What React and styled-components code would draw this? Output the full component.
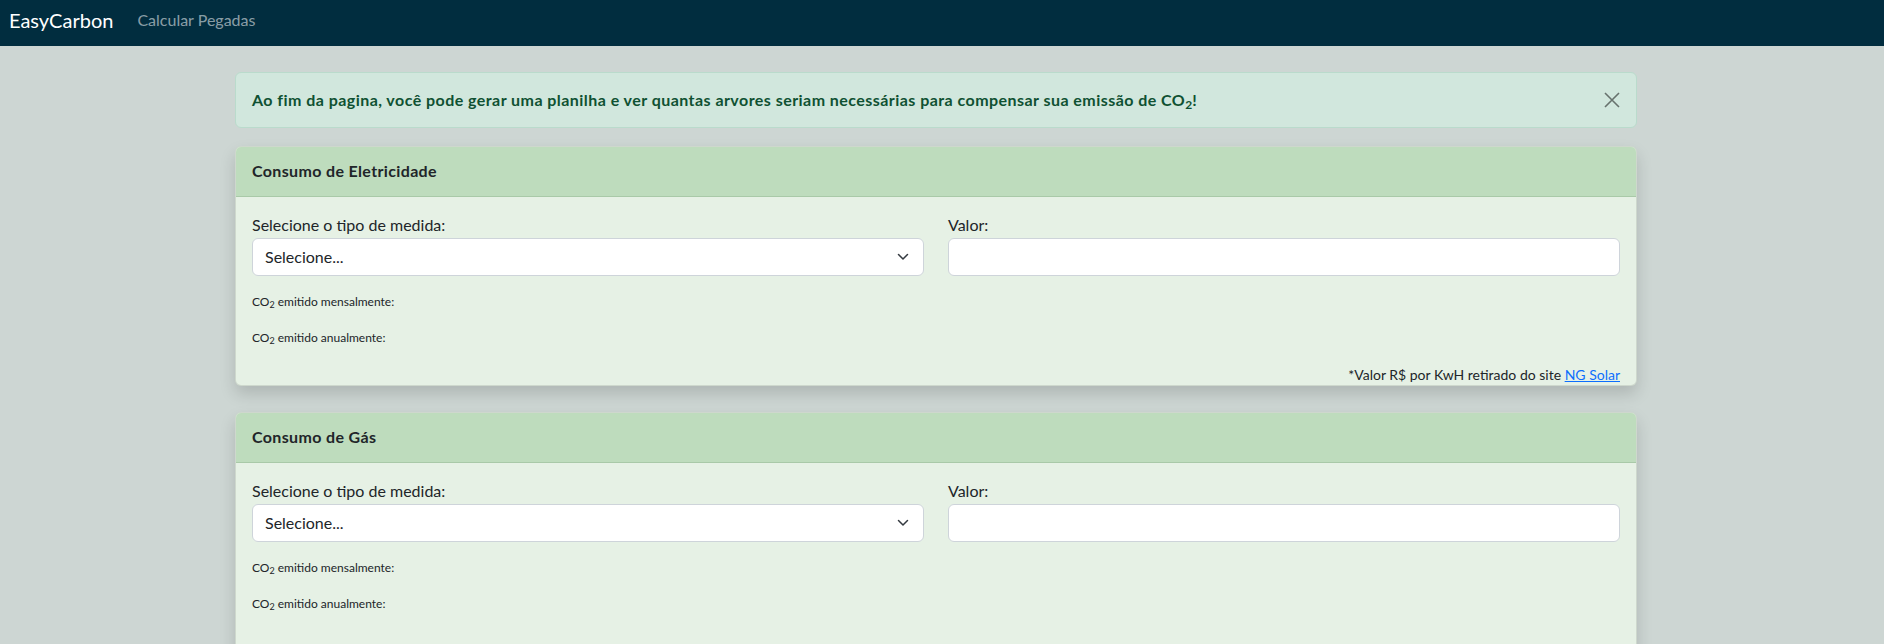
import React from 'react';
import styled, { createGlobalStyle } from 'styled-components';

const GlobalStyle = createGlobalStyle`
  * { box-sizing: border-box; }
  html, body { margin: 0; padding: 0; }
  body {
    background: #cdd6d3;
    font-family: Lato, "Noto Sans", sans-serif;
    font-size: 16px;
    line-height: 24px;
    color: #212529;
  }
`;

const Navbar = styled.nav`
  height: 46px;
  background: #012d3f;
  display: flex;
  align-items: flex-start;
  padding: 0 9px;
`;

const Brand = styled.a`
  font-size: 20px;
  line-height: 30px;
  padding-top: 5px;
  color: #ffffff;
  margin-right: 16px;
  text-decoration: none;
`;

const NavLink = styled.a`
  font-size: 16px;
  line-height: 24px;
  padding: 8px;
  color: rgba(255, 255, 255, 0.55);
  text-decoration: none;
`;

const Page = styled.main`
  padding: 26px 12px 40px 0;
`;

const Container = styled.div`
  width: 1402px;
  margin: 0 auto;
  display: flex;
  flex-direction: column;
  gap: 18px;
`;

const Alert = styled.div`
  display: flex;
  align-items: center;
  justify-content: space-between;
  background: #d1e7dd;
  border: 1px solid #badbcc;
  border-radius: 6px;
  color: #0f5132;
  padding: 15px 16px;
  font-weight: 700;
  letter-spacing: 0.45px;
`;

const CloseButton = styled.button`
  display: flex;
  align-items: center;
  justify-content: center;
  width: 16px;
  height: 16px;
  padding: 0;
  border: 0;
  background: transparent;
  color: #000;
  opacity: 0.5;
  cursor: pointer;
`;

const Sub = styled.sub`
  font-size: 0.75em;
  line-height: 0;
  position: relative;
  vertical-align: baseline;
  bottom: -0.25em;
  letter-spacing: 0;
`;

const Stack = styled.div`
  display: flex;
  flex-direction: column;
  gap: 26px;
`;

const Card = styled.section`
  background: #e6f1e5;
  border: 1px solid rgba(0, 0, 0, 0.1);
  border-radius: 6px;
  box-shadow: 0 8px 16px rgba(0, 0, 0, 0.15);
  overflow: hidden;
`;

const CardHeader = styled.header`
  background: #bedcbd;
  border-bottom: 1px solid #a9c9a8;
  padding: 12px 16px 13px;
  font-weight: 700;
  letter-spacing: 0.35px;
  color: #212529;
`;

const CardBody = styled.div`
  padding: 16px 16px ${(p) => (p.$last ? '40px' : '0')};
`;

const FormRow = styled.div`
  display: grid;
  grid-template-columns: 1fr 1fr;
  gap: 24px;
  margin-bottom: 16px;
`;

const Field = styled.div`
  display: flex;
  flex-direction: column;
`;

const Label = styled.label`
  display: block;
  line-height: 24px;
  margin-bottom: 1px;
`;

const SelectBox = styled.div`
  position: relative;
  display: flex;
  align-items: center;
  height: 38px;
  background: #fff;
  border: 1px solid #ced4da;
  border-radius: 6px;
  padding: 6px 36px 6px 12px;
`;

const Chevron = styled.svg`
  position: absolute;
  right: 14px;
  top: 14px;
  width: 12px;
  height: 8px;
`;

const Input = styled.input`
  height: 38px;
  background: #fff;
  border: 1px solid #ced4da;
  border-radius: 6px;
  padding: 6px 12px;
  font: inherit;
`;

const Result = styled.p`
  margin: 0 0 16px;
  font-size: 12px;
  line-height: 20px;
`;

const Footnote = styled.p`
  margin: 1px 0 0;
  text-align: right;
  font-size: 14px;
  line-height: 21px;
`;

const Link = styled.a`
  color: #0d6efd;
  text-decoration: underline;
`;

function CO2() {
  return (
    <>
      CO<Sub>2</Sub>
    </>
  );
}

function ConsumptionCard({ title, footnote }) {
  return (
    <Card>
      <CardHeader>{title}</CardHeader>
      <CardBody $last={!footnote}>
        <FormRow>
          <Field>
            <Label>Selecione o tipo de medida:</Label>
            <SelectBox>
              Selecione...
              <Chevron viewBox="0 0 12 8">
                <path
                  d="M1.5 1.5l4.5 4.5 4.5-4.5"
                  fill="none"
                  stroke="#343a40"
                  strokeWidth="1.5"
                  strokeLinecap="round"
                  strokeLinejoin="round"
                />
              </Chevron>
            </SelectBox>
          </Field>
          <Field>
            <Label>Valor:</Label>
            <Input type="text" />
          </Field>
        </FormRow>
        <Result>
          <CO2 /> emitido mensalmente:
        </Result>
        <Result>
          <CO2 /> emitido anualmente:
        </Result>
        {footnote && (
          <Footnote>
            *Valor R$ por KwH retirado do site <Link href="#">NG Solar</Link>
          </Footnote>
        )}
      </CardBody>
    </Card>
  );
}

export default function App() {
  return (
    <>
      <GlobalStyle />
      <Navbar>
        <Brand href="#">EasyCarbon</Brand>
        <NavLink href="#">Calcular Pegadas</NavLink>
      </Navbar>
      <Page>
        <Container>
          <Alert>
            <span>
              Ao fim da pagina, você pode gerar uma planilha e ver quantas arvores seriam
              necessárias para compensar sua emissão de CO<Sub>2</Sub>!
            </span>
            <CloseButton aria-label="Close">
              <svg width="16" height="16" viewBox="0 0 16 16">
                <path d="M1 1l14 14M15 1L1 15" stroke="currentColor" strokeWidth="1.6" />
              </svg>
            </CloseButton>
          </Alert>
          <Stack>
            <ConsumptionCard title="Consumo de Eletricidade" footnote />
            <ConsumptionCard title="Consumo de Gás" />
          </Stack>
        </Container>
      </Page>
    </>
  );
}
